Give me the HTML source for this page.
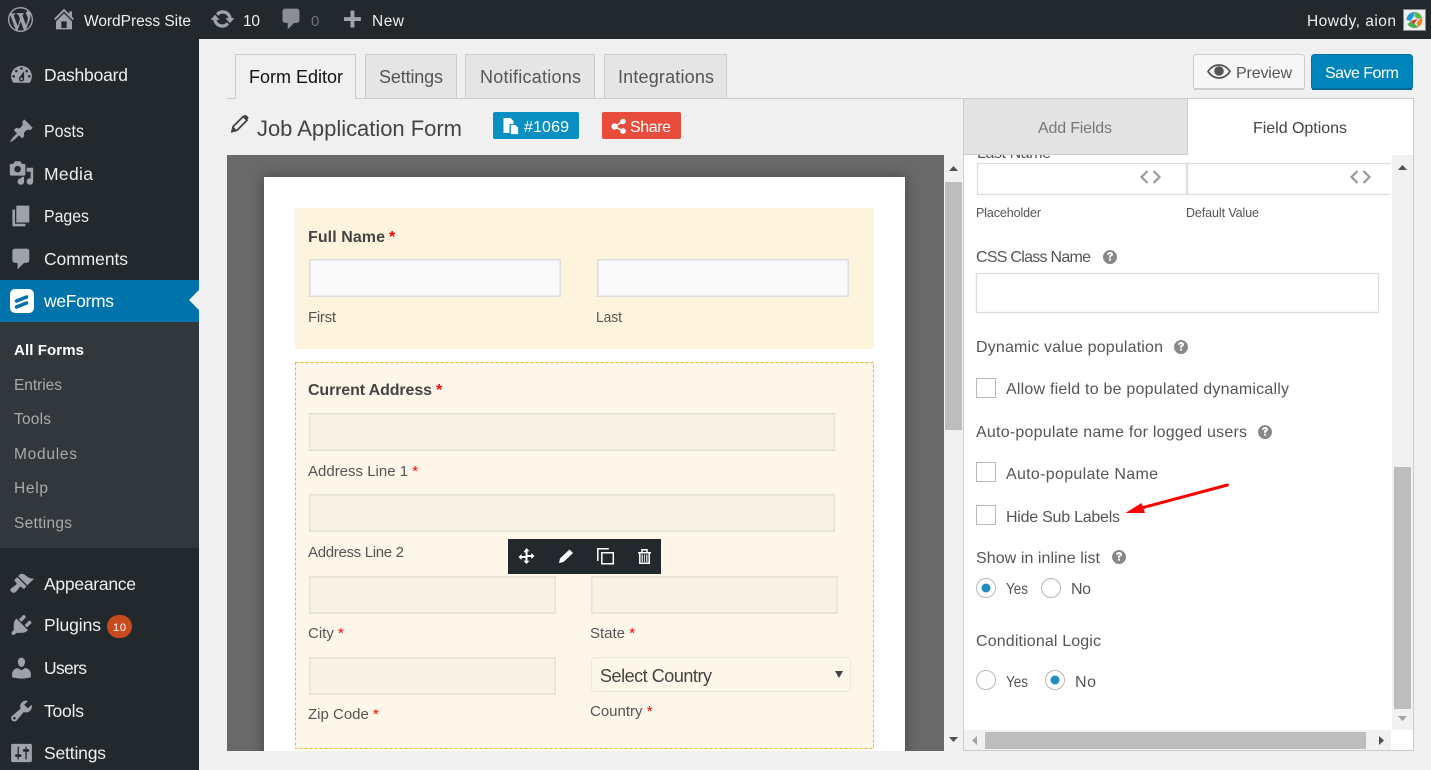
<!DOCTYPE html>
<html lang="en"><head><meta charset="utf-8"><title>Form Editor</title>
<style>
html,body{margin:0;padding:0;background:#f0f0f0;overflow:hidden}
svg{display:block;font-family:"Liberation Sans",sans-serif}
text{white-space:pre}
.m{font-size:17.500px;fill:#eee}
.s{font-size:15.500px;fill:#a8abae}
.b{font-size:15.500px;fill:#eee}
.t{font-size:18px;fill:#555}
.f{font-size:15px;fill:#555}
.fb{font-size:16px;font-weight:bold;fill:#444}
.r{fill:#f00}
.o{font-size:16px;fill:#555}
.ic{fill:#9ea3a8}
.w{fill:#fff}
.i1{fill:#f9f9f9;stroke:#ddd;stroke-width:1.500}
.i2{fill:#f8f1e5;stroke:#e8e2d5;stroke-width:1.500}
</style></head><body>
<svg width="1431" height="770" viewBox="0 0 1431 770" xmlns="http://www.w3.org/2000/svg">
<defs>
<path id="q" d="M0-7a7 7 0 1 0 .01 0zM-3 -2.200C-2.800-4.300-1.300-5-.1-5 1.700-5 3-4 3-2.400 3-.8 1.100-.6 1-.1V.7H-1V-.5C-1-1.800 1-2 1-2.500 1-2.900.5-3.100 0-3.100-.6-3.100-1-2.800-1.100-2.200zM-1 1.700H1V3.600H-1z"/>
</defs>
<rect width="1431" height="770" fill="#f0f0f0"/>

<!-- admin bar -->
<rect width="1431" height="39" fill="#23282d"/>
<rect y="39" width="199" height="731" fill="#23282d"/>
<path class="ic" transform="translate(8,7) scale(1.25)" d="M20 10c0-5.510-4.490-10-10-10C4.480 0 0 4.490 0 10c0 5.520 4.480 10 10 10 5.510 0 10-4.480 10-10zM7.780 15.370L4.370 6.220c.55-.02 1.170-.08 1.170-.08.5-.06.44-1.130-.06-1.110 0 0-1.450.11-2.370.11-.18 0-.37 0-.58-.01C4.120 2.690 6.890 1.050 10 1.050c2.320 0 4.430.87 6.020 2.340-.68-.11-1.650.39-1.650 1.580 0 .74.45 1.360.9 2.100.35.61.55 1.360.55 2.460 0 1.490-1.400 5-1.400 5l-3.030-8.350c.54-.02.82-.17.82-.17.5-.05.44-1.250-.06-1.220 0 0-1.440.12-2.380.12-.87 0-2.330-.12-2.330-.12-.5-.03-.56 1.200-.06 1.220l.92.08 1.260 3.410zM17.410 10c.24-.64.74-1.870.43-4.250.7 1.290 1.050 2.710 1.050 4.250 0 3.290-1.730 6.240-4.400 7.780.97-2.590 1.940-5.200 2.920-7.780zM6.100 18.090C3.120 16.650 1.110 13.530 1.110 10c0-1.300.23-2.480.72-3.590C3.250 10.300 4.670 14.200 6.100 18.090zm4.030-6.630l2.580 6.980c-.86.29-1.760.45-2.710.45-.79 0-1.570-.11-2.290-.33.81-2.380 1.620-4.740 2.420-7.100z"/>
<path class="ic" transform="translate(50.700,5.400) scale(1.33)" d="M16 8.500l1.530 1.530-1.060 1.060L10 4.620l-6.470 6.470-1.060-1.060L10 2.500l4 4v-2h2v4zm-6-2.460l6 5.990V18H4v-5.970zM12 17v-5H8v5h4z"/>
<text class="b" x="84" y="26" textLength="107">WordPress Site</text>
<path class="ic" transform="translate(209.500,6) scale(1.3)" d="M10.200 3.280c3.530 0 6.430 2.610 6.920 6h2.080l-3.500 4-3.500-4h2.320c-.45-1.970-2.210-3.450-4.320-3.450-1.450 0-2.730.71-3.540 1.780L4.950 5.660C6.230 4.200 8.110 3.280 10.200 3.280zm-.4 13.440c-3.520 0-6.430-2.610-6.920-6H.8l3.500-4c1.170 1.330 2.330 2.670 3.500 4H5.480c.45 1.970 2.210 3.450 4.320 3.450 1.450 0 2.730-.71 3.540-1.780l1.710 1.950c-1.280 1.460-3.150 2.380-5.250 2.380z"/>
<text class="b" x="243" y="26" textLength="17">10</text>
<path fill="#8a8f94" transform="translate(278.600,6) scale(1.3)" d="M5 2h9c1.100 0 2 .9 2 2v7c0 1.100-.9 2-2 2h-2l-5 5v-5H5c-1.100 0-2-.9-2-2V4c0-1.100.9-2 2-2z"/>
<text x="311" y="26" font-size="15" fill="#6f7479">0</text>
<path class="ic" transform="translate(338.800,8) scale(1.3)" d="M17 7v3h-5v5H9v-5H4V7h5V2h3v5h5z"/>
<text class="b" x="372" y="26" textLength="32">New</text>
<text class="b" x="1307" y="26" textLength="89">Howdy, aion</text>
<rect x="1403.500" y="9.500" width="22" height="21" fill="#eee" stroke="#888" stroke-width="1"/>
<path d="M1406.500 20a8 8 0 0 1 8-8l-1 5-3 4z" fill="#1f9ad6"/>
<path d="M1414.500 12a8 8 0 0 1 7.500 5.500l-4 1.500-3.500-2.500z" fill="#59b548"/>
<path d="M1422 17.500a8 8 0 0 1-3.500 9.500l-2-3.500 2.500-4z" fill="#e8872c"/>
<path d="M1418.500 27a8 8 0 0 1-11-3l3-2.500 3.500 2z" fill="#4caf50"/>
<path d="M1410.500 21l7-2-3.500 5z" fill="#d9362b"/>

<!-- sidebar -->
<path class="ic" transform="translate(8.500,62) scale(1.3)" d="M3.760 16h12.480c1.100-1.370 1.760-3.110 1.760-5 0-4.420-3.580-8-8-8s-8 3.580-8 8c0 1.890.66 3.630 1.760 5zM10 4c.55 0 1 .45 1 1s-.45 1-1 1-1-.45-1-1 .45-1 1-1zM6 6c.55 0 1 .45 1 1s-.45 1-1 1-1-.45-1-1 .45-1 1-1zm8 0c.55 0 1 .45 1 1s-.45 1-1 1-1-.45-1-1 .45-1 1-1zm-5.370 5.550L12 7v6c0 1.100-.9 2-2 2s-2-.9-2-2c0-.57.24-1.080.63-1.450zM4 10c.55 0 1 .45 1 1s-.45 1-1 1-1-.45-1-1 .45-1 1-1zm12 0c.55 0 1 .45 1 1s-.45 1-1 1-1-.45-1-1 .45-1 1-1zm-5 3c0-.55-.45-1-1-1s-1 .45-1 1 .45 1 1 1 1-.45 1-1z"/>
<text class="m" x="44" y="81" textLength="84">Dashboard</text>
<path class="ic" transform="translate(8.500,118) scale(1.3)" d="M10.440 3.020l1.820-1.820 6.360 6.350-1.830 1.820c-1.050-.68-2.480-.57-3.410.36l-.75.75c-.92.93-1.040 2.350-.35 3.410l-1.830 1.820-2.410-2.410-2.800 2.790c-.42.42-3.380 2.710-3.800 2.290s1.860-3.390 2.280-3.810l2.790-2.790L4.100 9.360l1.830-1.820c1.050.69 2.480.57 3.400-.36l.75-.75c.93-.92 1.050-2.350.36-3.410z"/>
<text class="m" x="44" y="137" textLength="40" lengthAdjust="spacingAndGlyphs">Posts</text>
<path class="ic" transform="translate(8.500,160) scale(1.3)" d="M13 11V4c0-.55-.45-1-1-1h-1.670L9 1H5L3.670 3H2c-.55 0-1 .45-1 1v7c0 .55.45 1 1 1h10c.55 0 1-.45 1-1zM7 4.500c1.380 0 2.500 1.120 2.500 2.500S8.380 9.500 7 9.500 4.500 8.380 4.500 7 5.620 4.500 7 4.500zM14 6h5v10.500c0 1.380-1.120 2.500-2.500 2.500S14 17.880 14 16.500s1.120-2.500 2.500-2.500c.17 0 .34.02.5.05V9h-3V6zm-4 8.050V13h2v3.500c0 1.380-1.120 2.500-2.500 2.500S7 17.880 7 16.500 8.120 14 9.500 14c.17 0 .34.02.5.05z"/>
<text class="m" x="44" y="180" textLength="49">Media</text>
<path class="ic" transform="translate(8.500,203) scale(1.3)" d="M6 15V2h10v13H6zm-1 1h8v2H3V5h2v11z"/>
<text class="m" x="44" y="222" textLength="45" lengthAdjust="spacingAndGlyphs">Pages</text>
<path class="ic" transform="translate(8.500,246) scale(1.3)" d="M5 2h9c1.100 0 2 .9 2 2v7c0 1.100-.9 2-2 2h-2l-5 5v-5H5c-1.100 0-2-.9-2-2V4c0-1.100.9-2 2-2z"/>
<text class="m" x="44" y="265" textLength="84">Comments</text>
<rect y="280" width="199" height="42" fill="#0073aa"/>
<rect x="10" y="289" width="24" height="24" rx="5" fill="#fff"/>
<path d="M16.500 301l10-4M16.500 307l10-4" stroke="#0073aa" stroke-width="3.600" stroke-linecap="round" fill="none"/>
<text x="44" y="307" font-size="17.500" fill="#fff" textLength="70">weForms</text>
<path d="M199 290l-10 10 10 10z" fill="#f1f1f1"/>
<rect y="322" width="199" height="226" fill="#32373c"/>
<text x="14" y="355" font-size="15" font-weight="bold" fill="#fff" textLength="70">All Forms</text>
<text class="s" x="14" y="390" textLength="48">Entries</text>
<text class="s" x="14" y="424" textLength="37">Tools</text>
<text class="s" x="14" y="459" textLength="63">Modules</text>
<text class="s" x="14" y="493" textLength="34">Help</text>
<text class="s" x="14" y="528" textLength="58">Settings</text>
<path class="ic" transform="translate(8.500,571) scale(1.3)" d="M14.480 11.060L7.410 3.990l1.500-1.500c.5-.56 2.300-.47 3.510.32 1.210.8 1.430 1.280 2.910 2.100 1.180.64 2.450 1.260 4.450.85zm-.71.71L6.700 4.700 4.930 6.470c-.39.39-.39 1.020 0 1.410l1.060 1.060c.39.39.39 1.030 0 1.420-.6.6-1.430 1.110-2.210 1.690-.35.26-.7.53-1.010.84C1.430 13.230.91 14.670 2.200 16s2.760.79 3.890-.34c.31-.31.58-.66.84-1.010.58-.78 1.090-1.610 1.690-2.210.39-.39 1.020-.39 1.410 0l1.060 1.060c.39.39 1.020.39 1.410 0z"/>
<text class="m" x="44" y="590" textLength="92">Appearance</text>
<path class="ic" transform="translate(8.500,612) scale(1.3)" d="M13.110 4.360L9.870 7.600 8 5.730l3.240-3.240c.35-.34 1.050-.2 1.560.32.52.51.66 1.210.31 1.550zm-8 1.770l.91-1.120 9.010 9.010-1.190.84c-.71.71-2.630 1.160-3.820 1.160H6.140L4.900 17.260c-.59.59-1.540.59-2.120 0-.59-.58-.59-1.530 0-2.120l1.240-1.240v-3.880c0-1.130.4-3.190 1.090-3.890zm7.260 3.970l3.240-3.240c.34-.35 1.040-.21 1.550.31.52.51.66 1.210.31 1.550l-3.240 3.250z"/>
<text class="m" x="44" y="631" textLength="57">Plugins</text>
<rect x="107" y="615" width="25" height="23" rx="11.500" fill="#ca4a1f"/>
<text x="113" y="631" font-size="11" fill="#fff" textLength="13">10</text>
<path class="ic" transform="translate(8.500,655) scale(1.3)" d="M10 9.250c-2.270 0-2.730-3.440-2.730-3.440C7 4.020 7.820 2 9.970 2c2.160 0 2.980 2.020 2.710 3.810 0 0-.41 3.440-2.680 3.440zm0 2.570L12.720 10c2.390 0 4.520 2.330 4.520 4.530v2.490s-3.650 1.130-7.240 1.130c-3.650 0-7.240-1.130-7.240-1.130v-2.490c0-2.250 1.940-4.480 4.470-4.480z"/>
<text class="m" x="44" y="674" textLength="43">Users</text>
<path class="ic" transform="translate(8.500,698) scale(1.3)" d="M16.680 9.770c-1.340 1.340-3.300 1.670-4.950.99l-5.410 6.520c-.99.99-2.590.99-3.580 0s-.99-2.590 0-3.570l6.520-5.420c-.68-1.650-.35-3.610.99-4.950 1.280-1.280 3.120-1.620 4.720-1.060l-2.890 2.890 2.820 2.820 2.860-2.870c.53 1.580.18 3.390-1.080 4.650zM3.810 16.210c.4.39 1.040.39 1.430 0 .4-.4.4-1.040 0-1.430-.39-.4-1.030-.4-1.430 0-.39.39-.39 1.030 0 1.430z"/>
<text class="m" x="44" y="717" textLength="40">Tools</text>
<path class="ic" transform="translate(8.500,740) scale(1.3)" d="M18 16V4c0-.55-.45-1-1-1H3c-.55 0-1 .45-1 1v12c0 .55.45 1 1 1h14c.55 0 1-.45 1-1zM8 11h1c.55 0 1 .45 1 1s-.45 1-1 1H8v1.500c0 .28-.22.5-.5.5s-.5-.22-.5-.5V13H6c-.55 0-1-.45-1-1s.45-1 1-1h1V5.500c0-.28.22-.5.5-.5s.5.22.5.5V11zm5-2h-1c-.55 0-1-.45-1-1s.45-1 1-1h1V5.500c0-.28.22-.5.5-.5s.5.22.5.5V7h1c.55 0 1 .45 1 1s-.45 1-1 1h-1v5.500c0 .28-.22.5-.5.5s-.5-.22-.5-.5V9z"/>
<text class="m" x="44" y="759" textLength="62">Settings</text>

<!-- tabs -->
<rect x="227" y="98" width="737" height="1" fill="#ccc"/>
<rect x="235.500" y="54.500" width="120" height="44" fill="#f0f0f0" stroke="#ccc"/>
<rect x="236" y="98" width="119" height="2" fill="#f0f0f0"/>
<text x="249" y="83" font-size="18" fill="#111" textLength="94">Form Editor</text>
<rect x="365.500" y="54.500" width="91" height="44" fill="#e5e5e5" stroke="#ccc"/>
<text class="t" x="379" y="83" textLength="64">Settings</text>
<rect x="465.500" y="54.500" width="129" height="44" fill="#e5e5e5" stroke="#ccc"/>
<text class="t" x="480" y="83" textLength="101">Notifications</text>
<rect x="604.500" y="54.500" width="122" height="44" fill="#e5e5e5" stroke="#ccc"/>
<text class="t" x="618" y="83" textLength="96">Integrations</text>

<!-- title -->
<path d="M232 131.500l1.200-5 10-10 3.800 3.800-10 10z" fill="none" stroke="#444" stroke-width="1.800"/>
<path d="M243.500 116l1-.8c.6-.5 1.300-.5 1.800 0l1.800 1.800c.5.5.5 1.200 0 1.800l-1 1.100z" fill="#444"/>
<path d="M231 132l1.600-6 4.400 4.400z" fill="#444"/>
<text x="257" y="136" font-size="22" fill="#444" textLength="205">Job Application Form</text>
<rect x="493" y="112" width="86" height="27" rx="2" fill="#0a8fc2"/>
<path d="M503.500 118h7l3 3v3h-4v9h-6z" fill="#fff"/>
<path d="M510.500 124.500h5l3 3v7h-8z" fill="#fff" stroke="#0a8fc2" stroke-width=".8"/>
<text x="524" y="132" font-size="16" fill="#fff" textLength="45">#1069</text>
<rect x="602" y="112" width="79" height="27" rx="2" fill="#e74c3c"/>
<circle cx="614.500" cy="126.500" r="3.100" fill="#fff"/><circle cx="623" cy="121.500" r="2.800" fill="#fff"/><circle cx="623" cy="131" r="2.800" fill="#fff"/>
<path d="M614.500 126.500l8.500-5M614.500 126.500l8.500 4.500" stroke="#fff" stroke-width="1.500"/>
<text x="630" y="132" font-size="16" fill="#fff" textLength="41">Share</text>

<!-- preview/save -->
<rect x="1193.500" y="54.500" width="111" height="35" rx="3" fill="#f7f7f7" stroke="#ccc"/>
<rect x="1194" y="88" width="110" height="2" fill="#ccc"/>
<path d="M1208 71.500c3-4.500 7-6.500 11-6.500s8 2 11 6.500c-3 4.500-7 6.500-11 6.500s-8-2-11-6.500z" fill="none" stroke="#555" stroke-width="1.700"/>
<circle cx="1219" cy="71" r="4.800" fill="#555"/>
<text x="1236" y="78" font-size="16" fill="#555" textLength="56">Preview</text>
<rect x="1311.500" y="54.500" width="101" height="35" rx="3" fill="#0085ba" stroke="#0073aa"/>
<rect x="1312" y="88" width="100" height="2" fill="#006799"/>
<text x="1325" y="78" font-size="16" fill="#fff" textLength="74">Save Form</text>

<!-- canvas -->
<svg x="227" y="155" width="717" height="596" viewBox="227 155 717 596">
<rect x="227" y="155" width="717" height="596" fill="#696969"/>
<rect x="264" y="177" width="641" height="620" fill="#fff" style="filter:drop-shadow(0 0 7px rgba(0,0,0,.35))"/>
<rect x="295" y="208" width="579" height="141" fill="#fef3dd"/>
<text class="fb" x="308" y="242" textLength="77">Full Name</text><text class="fb" x="389" y="242" style="fill:#f00">*</text>
<rect class="i1" x="309.750" y="259.750" width="250.500" height="36.500"/>
<rect class="i1" x="597.750" y="259.750" width="250.500" height="36.500"/>
<text class="f" x="308" y="322" textLength="28">First</text>
<text class="f" x="596" y="322" textLength="26" lengthAdjust="spacingAndGlyphs">Last</text>

<rect x="295.500" y="362.500" width="578" height="386" fill="#fef7e9" stroke="#f0b429" stroke-dasharray="3 2"/>
<text class="fb" x="308" y="395" textLength="124">Current Address</text><text class="fb" x="436" y="395" style="fill:#f00">*</text>
<rect class="i2" x="309.750" y="413.750" width="524.500" height="36.500"/>
<text class="f" x="308" y="476">Address Line 1 <tspan class="r">*</tspan></text>
<rect class="i2" x="309.750" y="494.750" width="524.500" height="36.500"/>
<text class="f" x="308" y="557" textLength="96">Address Line 2</text>
<rect class="i2" x="309.750" y="576.750" width="245.500" height="36.500"/>
<rect class="i2" x="591.750" y="576.750" width="245.500" height="36.500"/>
<text class="f" x="308" y="638">City <tspan class="r">*</tspan></text>
<text class="f" x="590" y="638">State <tspan class="r">*</tspan></text>
<rect class="i2" x="309.750" y="657.750" width="245.500" height="36.500"/>
<text class="f" x="308" y="719">Zip Code <tspan class="r">*</tspan></text>
<rect x="591.500" y="657.500" width="259" height="34" rx="3" fill="#fef7e9" stroke="#eee8da"/>
<text x="600" y="682" font-size="18" fill="#444" textLength="112">Select Country</text>
<path d="M835 671h8l-4 7z" fill="#444"/>
<text class="f" x="590" y="716">Country <tspan class="r">*</tspan></text>

<!-- toolbar -->
<rect x="508" y="539" width="153" height="35" fill="#23282d"/>
<path fill="#fff" d="M526.500 548l3 3.200h-2v3.800h3.800v-2l3.200 3-3.200 3v-2h-3.800v3.800h2l-3 3.200-3-3.200h2V558h-3.800v2l-3.200-3 3.200-3v2h3.800v-3.800h-2z"/>
<path fill="#fff" d="M569.500 549.500l3.500 3.500-9.500 9-4.500 1 1-4.500z"/>
<path fill="none" stroke="#fff" stroke-width="1.500" d="M597.800 561v-12.200h11M601.800 552.800h11.500v11h-11.500z"/>
<path fill="none" stroke="#fff" stroke-width="1.500" d="M638 552.800h13M639.800 553v10.200h9.400V553M642 552.500v-2.700h5v2.700"/>
<path fill="#ccc" d="M641.500 554.500h6v7.500h-6z"/>
<path stroke="#23282d" d="M643.500 554.500v7.500M645.500 554.500v7.500"/>
</svg>

<!-- canvas scrollbar -->
<rect x="944" y="155" width="19" height="596" fill="#f1f1f1"/>
<path d="M949 171l4.500-5 4.500 5z" fill="#505050"/>
<rect x="945" y="182" width="17" height="248" fill="#bdbdbd"/>
<path d="M949 737l4.500 5 4.500-5z" fill="#505050"/>

<!-- right panel -->
<rect x="963.500" y="98.500" width="450" height="652" fill="#fff" stroke="#ccc"/>
<text class="o" x="977" y="158" textLength="74">Last Name</text>
<rect x="964" y="99" width="449" height="56" fill="#fff"/>
<rect x="963.500" y="98.500" width="224" height="56" fill="#e3e3e3" stroke="#ccc"/>
<text x="1038" y="133" font-size="16" fill="#777" textLength="74">Add Fields</text>
<text x="1253" y="133" font-size="16" fill="#444" textLength="94">Field Options</text>

<rect x="977.500" y="163.500" width="209" height="31" fill="#fff" stroke="#ddd" stroke-width="1.300"/>
<path d="M1391 163.500H1187.500V194.500H1391" fill="#fff" stroke="#ddd" stroke-width="1.300"/>
<path d="M1147.500 171l-6 6 6 6M1153.500 171l6 6-6 6" fill="none" stroke="#999" stroke-width="2.200"/>
<path d="M1357.500 171l-6 6 6 6M1363.500 171l6 6-6 6" fill="none" stroke="#999" stroke-width="2.200"/>
<text x="976" y="217" font-size="12.500" fill="#555" textLength="65">Placeholder</text>
<text x="1186" y="217" font-size="12.500" fill="#555" textLength="73">Default Value</text>
<text class="o" x="976" y="262" textLength="115">CSS Class Name</text>
<use href="#q" x="1110" y="257" fill="#888"/>
<rect x="976.500" y="273.500" width="402" height="39" fill="#fff" stroke="#ddd" stroke-width="1.300"/>
<text class="o" x="976" y="352" textLength="187">Dynamic value population</text>
<use href="#q" x="1181" y="347" fill="#888"/>
<rect x="976.500" y="378.500" width="19" height="19" fill="#fff" stroke="#b4b9be"/>
<text class="o" x="1006" y="394" textLength="283">Allow field to be populated dynamically</text>
<text class="o" x="976" y="437" textLength="271">Auto-populate name for logged users</text>
<use href="#q" x="1265" y="432" fill="#888"/>
<rect x="976.500" y="462.500" width="19" height="19" fill="#fff" stroke="#b4b9be"/>
<text class="o" x="1006" y="479" textLength="152">Auto-populate Name</text>
<rect x="976.500" y="505.500" width="19" height="19" fill="#fff" stroke="#b4b9be"/>
<text class="o" x="1006" y="522" textLength="114">Hide Sub Labels</text>
<path d="M1227.500 485l-90 24" stroke="#f00" stroke-width="3" stroke-linecap="round"/>
<path d="M1125.500 513l16-10 3.500 10z" fill="#f00"/>
<text class="o" x="976" y="563" textLength="124">Show in inline list</text>
<use href="#q" x="1119" y="557" fill="#888"/>
<circle cx="986" cy="588" r="9.500" fill="#fff" stroke="#b4b9be"/><circle cx="986" cy="588" r="4.500" fill="#1e8cbe"/>
<text class="o" x="1006" y="594" textLength="22" lengthAdjust="spacingAndGlyphs">Yes</text>
<circle cx="1051" cy="588" r="9.500" fill="#fff" stroke="#b4b9be"/>
<text class="o" x="1071" y="594" textLength="20">No</text>
<text class="o" x="976" y="646" textLength="125">Conditional Logic</text>
<circle cx="986" cy="680" r="9.500" fill="#fff" stroke="#b4b9be"/>
<text class="o" x="1006" y="687" textLength="22" lengthAdjust="spacingAndGlyphs">Yes</text>
<circle cx="1055" cy="680" r="9.500" fill="#fff" stroke="#b4b9be"/><circle cx="1055" cy="680" r="4.500" fill="#1e8cbe"/>
<text class="o" x="1075" y="687" textLength="21">No</text>

<!-- panel scrollbars -->
<rect x="1392" y="155" width="21" height="575" fill="#f1f1f1"/>
<path d="M1398 170l4.500-5 4.500 5z" fill="#505050"/>
<rect x="1394" y="467" width="17" height="242" fill="#bdbdbd"/>
<path d="M1398 716l4.500 5 4.500-5z" fill="#a3a3a3"/>
<rect x="964" y="730" width="427" height="20" fill="#f1f1f1"/>
<path d="M977 736l-5 4.500 5 4.500z" fill="#a3a3a3"/>
<rect x="985" y="732" width="381" height="17" fill="#bdbdbd"/>
<path d="M1379 736l5 4.500-5 4.500z" fill="#505050"/>
</svg>
</body></html>
